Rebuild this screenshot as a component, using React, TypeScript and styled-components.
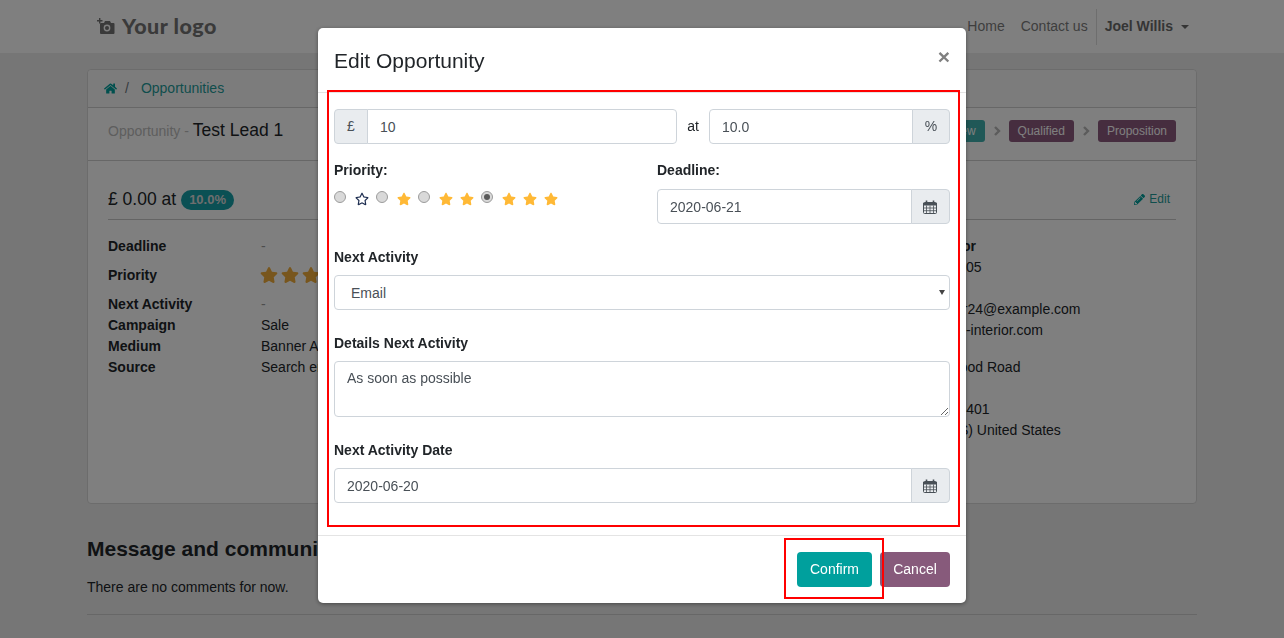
import React from "react";
import styled, { createGlobalStyle } from "styled-components";
import { FaHome, FaPencilAlt, FaStar, FaRegStar } from "react-icons/fa";

const GlobalStyle = createGlobalStyle`
	html, body {
		margin: 0;
		height: 100%;
		overflow: hidden;
		background: #ededed;
		font-family: "Liberation Sans", Arial, sans-serif;
		font-size: 14px;
		line-height: 21px;
		color: #212529;
	}
	* { box-sizing: border-box; }
`;

const Navbar = styled.header`
	height: 53px;
	background: #fff;
`;

const NavInner = styled.div`
	width: 1110px;
	height: 100%;
	margin: 0 auto;
	padding: 0 8px 0 10px;
	display: flex;
	align-items: center;
`;

const Logo = styled.div`
	display: flex;
	align-items: center;
	gap: 7px;
	font-family: Lato, sans-serif;
	font-weight: 900;
	font-size: 21.5px;
	letter-spacing: 0.5px;
	color: #747474;
`;

const NavLinks = styled.nav`
	margin-left: auto;
	display: flex;
	align-items: center;
	color: #7d7d7d;
`;

const NavLink = styled.span`
	margin-left: 16px;
`;

const UserMenu = styled.div`
	margin-left: 8px;
	height: 36px;
	padding-left: 8px;
	border-left: 1px solid #ddd;
	display: flex;
	align-items: center;
	gap: 8px;
	font-weight: 700;
	color: #6b6b6b;
`;

const Caret = styled.i`
	width: 0;
	height: 0;
	border-top: 4px solid #6b6b6b;
	border-left: 4px solid transparent;
	border-right: 4px solid transparent;
`;

const Main = styled.main`
	width: 1110px;
	margin: 16px auto 0;
`;

const Card = styled.section`
	height: 435px;
	background: #fff;
	border: 1px solid #d8d8d8;
	border-radius: 4px;
`;

const Breadcrumb = styled.div`
	height: 38px;
	padding: 0 16px;
	display: flex;
	align-items: center;
	background: #f9f9f9;
	border-bottom: 1px solid #cfcfcf;
	border-radius: 4px 4px 0 0;
	color: #6c757d;
`;

const TealLink = styled.span`
	color: #1f9c9a;
	margin-left: 12px;
`;

const HomeIcon = styled(FaHome)`
	color: #00a09d;
	font-size: 13px;
	margin-right: 8px;
`;

const TitleRow = styled.div`
	height: 53px;
	padding: 11px 20px 0;
	display: flex;
	justify-content: space-between;
	border-bottom: 1px solid #cfcfcf;
`;

const Title = styled.div`
	color: #bcbcbc;
	font-size: 14px;
	line-height: 22px;
`;

const TitleName = styled.span`
	color: #212529;
	font-size: 17.5px;
`;

const Steps = styled.div`
	display: flex;
	align-items: flex-start;
	gap: 8px;
	padding-top: 1px;
`;

const Step = styled.span<{ $active?: boolean }>`
	height: 22px;
	padding: 0 9px;
	font-size: 12px;
	line-height: 22px;
	border-radius: 3px;
	color: #fff;
	background: ${({ $active }) => ($active ? "#40b0ae" : "#8d5a7e")};
`;

const ArrowSvg = styled.svg`
	margin: 6px 0 0 1px;
`;

const StepArrow = () => (
	<ArrowSvg width="7" height="10" viewBox="0 0 7 10" fill="none" stroke="#b8b8b8" strokeWidth="2.400">
		<path d="M1 1l4 4-4 4" />
	</ArrowSvg>
);

const CardBody = styled.div`
	padding: 28px 20px 0;
	display: grid;
	grid-template-columns: 777px 1fr;
`;

const Summary = styled.div`
	grid-column: 1 / 3;
	height: 31px;
	display: flex;
	align-items: flex-start;
	border-bottom: 1px solid #c9c9c9;
	font-size: 17.5px;
	margin-bottom: 16px;
`;

const Percent = styled.b`
	margin-left: 5px;
	margin-top: 1px;
	padding: 0 8px;
	height: 20px;
	border-radius: 10px;
	background: #17a0a8;
	color: #ddd;
	font-size: 13px;
	line-height: 20px;
`;

const EditLink = styled.span`
	margin-left: auto;
	margin-right: 6px;
	color: #1f9c9a;
	font-size: 12px;
	display: flex;
	align-items: center;
	gap: 4px;
	height: 21px;
`;

const InfoTable = styled.dl`
	margin: 0;
	display: grid;
	grid-template-columns: 153px 1fr;
	align-content: start;
`;

const InfoLabel = styled.dt<{ $gap?: boolean }>`
	font-weight: 700;
	margin-top: ${({ $gap }) => ($gap ? "8px" : "0")};
`;

const InfoValue = styled.dd<{ $gap?: boolean; $muted?: boolean }>`
	margin: ${({ $gap }) => ($gap ? "8px 0 0" : "0")};
	height: 21px;
	white-space: nowrap;
	display: flex;
	align-items: center;
	gap: 3px;
	color: ${({ $muted }) => ($muted ? "#9a9a9a" : "inherit")};
`;

const GoldStar = styled(FaStar)`
	color: #f0ad3a;
	font-size: 18px;
	margin-top: -2px;
	&:first-child {
		margin-left: -1px;
	}
`;

const Contact = styled.div`
	display: flex;
	flex-direction: column;
`;

const ContactLine = styled.div<{ $bold?: boolean; $top?: number }>`
	min-height: 21px;
	font-weight: ${({ $bold }) => ($bold ? 700 : 400)};
	margin-top: ${({ $top }) => $top ?? 0}px;
	white-space: nowrap;
`;

const Comments = styled.div`
	margin-top: 32px;
`;

const CommentsTitle = styled.h3`
	margin: 0 0 15px;
	font-size: 21px;
	line-height: 26px;
	font-weight: 700;
`;

const CommentsEnd = styled.hr`
	margin: 16px 0 0;
	border: 0;
	border-top: 1px solid #cfcfcf;
`;

const Backdrop = styled.div`
	position: fixed;
	inset: 0;
	background: rgba(0, 0, 0, 0.5);
`;

const Modal = styled.form`
	position: relative;
	width: 648px;
	height: 575px;
	margin: 28px auto 0;
	background: #fff;
	border-radius: 5px;
	box-shadow: 0 1px 4px rgba(0, 0, 0, 0.4);
	display: flex;
	flex-direction: column;
`;

const ModalHeader = styled.div`
	height: 65px;
	padding: 0 16px;
	display: flex;
	align-items: center;
	justify-content: space-between;
	border-bottom: 1px solid #e4e4e4;
`;

const ModalTitle = styled.h4`
	margin: 0;
	font-size: 21px;
	font-weight: 400;
`;

const CloseMark = styled.span`
	color: #808080;
	font-size: 21px;
	font-weight: 700;
	margin-bottom: 8px;
`;

const ModalBody = styled.div`
	flex: 1;
	padding: 16px 16px 0;
`;

const AmountRow = styled.div`
	display: grid;
	grid-template-columns: 343px 32px 241px;
	align-items: center;
	margin-bottom: 16px;
`;

const AtText = styled.span`
	text-align: center;
`;

const InputGroup = styled.div`
	display: flex;
	height: 35px;
`;

const Addon = styled.span<{ $side: "left" | "right"; $width: number }>`
	flex: 0 0 ${({ $width }) => $width}px;
	display: flex;
	align-items: center;
	justify-content: center;
	background: #e9ecef;
	color: #495057;
	border: 1px solid #ced4da;
	border-radius: ${({ $side }) => ($side === "left" ? "4px 0 0 4px" : "0 4px 4px 0")};
	margin-${({ $side }) => ($side === "left" ? "right" : "left")}: -1px;
`;

const TextInput = styled.input<{ $joined?: "left" | "right" }>`
	flex: 1;
	min-width: 0;
	height: 35px;
	padding: 0 12px;
	border: 1px solid #ced4da;
	border-radius: ${({ $joined }) =>
		$joined === "left" ? "0 4px 4px 0" : $joined === "right" ? "4px 0 0 4px" : "4px"};
	color: #495057;
	font: inherit;
	background: #fff;
	outline: none;
`;

const DetailRow = styled.div`
	display: grid;
	grid-template-columns: 323px 293px;
	margin-bottom: 23px;
`;

const Label = styled.label`
	display: block;
	font-weight: 700;
	margin-bottom: 7px;
`;

const DeadlineLabel = styled(Label)`
	margin-bottom: 8px;
`;

const StarsRow = styled.div`
	display: flex;
	align-items: center;
	height: 16px;
	margin-top: 9px;
`;

const Radio = styled.input`
	appearance: none;
	width: 12px;
	height: 12px;
	margin: 0 9px 2px 0;
	border-radius: 50%;
	border: 1px solid #9b9b9b;
	background: #d9d9d9;
	display: grid;
	place-items: center;
	&:checked::after {
		content: "";
		width: 6px;
		height: 6px;
		border-radius: 50%;
		background: #5a5a5a;
	}
`;

const StarChoice = styled.span`
	display: flex;
	gap: 7px;
	margin: 1px 7px 0 0;
`;

const RatingStar = styled(FaStar)`
	color: #ffb936;
	font-size: 14px;
`;

const EmptyStar = styled(FaRegStar)`
	color: #1d2d50;
	font-size: 14px;
`;

const FormGroup = styled.div`
	margin-bottom: 23px;
`;

const SelectBox = styled.div`
	position: relative;
	&::after {
		content: "";
		position: absolute;
		top: 15px;
		right: 5px;
		border-top: 5px solid #444;
		border-left: 3px solid transparent;
		border-right: 3px solid transparent;
	}
`;

const Select = styled.select`
	appearance: none;
	width: 100%;
	height: 35px;
	padding: 1px 12px 0 16px;
	border: 1px solid #ced4da;
	border-radius: 4px;
	background: #fff;
	color: #495057;
	font: inherit;
	outline: none;
`;

const TextArea = styled.textarea`
	display: block;
	width: 100%;
	height: 56px;
	padding: 6px 12px;
	border: 1px solid #ced4da;
	border-radius: 4px;
	color: #495057;
	font: inherit;
	resize: vertical;
	outline: none;
`;

const ModalFooter = styled.div`
	height: 68px;
	padding: 16px;
	display: flex;
	justify-content: flex-end;
	gap: 8px;
	border-top: 1px solid #e4e4e4;
`;

const Button = styled.button<{ $color: string; $width: number }>`
	width: ${({ $width }) => $width}px;
	height: 35px;
	padding: 0;
	border: 0;
	border-radius: 4px;
	background: ${({ $color }) => $color};
	color: #fff;
	font: inherit;
`;

const Highlight = styled.div<{ $left: number; $top: number; $width: number; $height: number }>`
	position: absolute;
	left: ${({ $left }) => $left}px;
	top: ${({ $top }) => $top}px;
	width: ${({ $width }) => $width}px;
	height: ${({ $height }) => $height}px;
	border: 2px solid #f00;
	pointer-events: none;
`;

const CalendarIcon = () => (
	<svg width="14" height="14" viewBox="0 0 14 14" fill="none" stroke="#495057" style={{ marginRight: 1 }}>
		<rect x="0.5" y="2.5" width="13" height="11" rx="1" />
		<path d="M0 3h14v2.5H0z" fill="#495057" stroke="none" />
		<path d="M0.5 8h13M0.5 10.7h13M3.500 5.500v8M7 5.500v8M10.500 5.500v8" strokeWidth="0.8" />
		<path d="M3.500 0.500v3M10.500 0.500v3" strokeWidth="1.600" />
	</svg>
);

const CameraLogo = () => (
	<svg width="18" height="17" viewBox="0 0 18 17" fill="#747474">
		<path d="M3 6a1 1 0 0 1 1-1h3l1-2h5l1 2h2.500a1 1 0 0 1 1 1v9a1 1 0 0 1-1 1H4a1 1 0 0 1-1-1z" />
		<circle cx="10" cy="10" r="3.400" fill="#fff" />
		<circle cx="10" cy="10" r="2" />
		<path d="M2 0h1.400v2H5.500v1.400H3.400v2H2v-2H0V2h2z" />
	</svg>
);

const Stars = ({ count }: { count: number }) => (
	<StarChoice>
		{count === 0 ? <EmptyStar /> : Array.from({ length: count }, (_, i) => <RatingStar key={i} />)}
	</StarChoice>
);

const App: React.FC = () => {
	return (
		<>
			<GlobalStyle />
			<Navbar>
				<NavInner>
					<Logo>
						<CameraLogo />
						Your logo
					</Logo>
					<NavLinks>
						<NavLink>Home</NavLink>
						<NavLink>Contact us</NavLink>
						<UserMenu>
							Joel Willis
							<Caret />
						</UserMenu>
					</NavLinks>
				</NavInner>
			</Navbar>
			<Main>
				<Card>
					<Breadcrumb>
						<HomeIcon />/<TealLink>Opportunities</TealLink>
					</Breadcrumb>
					<TitleRow>
						<Title>
							Opportunity - <TitleName>Test Lead 1</TitleName>
						</Title>
						<Steps>
							<Step $active>New</Step>
							<StepArrow />
							<Step>Qualified</Step>
							<StepArrow />
							<Step>Proposition</Step>
						</Steps>
					</TitleRow>
					<CardBody>
						<Summary>
							£ 0.00 at<Percent>10.0%</Percent>
							<EditLink>
								<FaPencilAlt size={11} color="#00a09d" />
								Edit
							</EditLink>
						</Summary>
						<InfoTable>
							<InfoLabel>Deadline</InfoLabel>
							<InfoValue $muted>-</InfoValue>
							<InfoLabel $gap>Priority</InfoLabel>
							<InfoValue $gap>
								<GoldStar />
								<GoldStar />
								<GoldStar />
							</InfoValue>
							<InfoLabel $gap>Next Activity</InfoLabel>
							<InfoValue $gap $muted>-</InfoValue>
							<InfoLabel>Campaign</InfoLabel>
							<InfoValue>Sale</InfoValue>
							<InfoLabel>Medium</InfoLabel>
							<InfoValue>Banner Ad</InfoValue>
							<InfoLabel>Source</InfoLabel>
							<InfoValue>Search engine</InfoValue>
						</InfoTable>
						<Contact>
							<ContactLine $bold>Azure Interior</ContactLine>
							<ContactLine>(870)-931-0505</ContactLine>
							<ContactLine $top={21}>azure.Interior24@example.com</ContactLine>
							<ContactLine>www.azure-1-interior.com</ContactLine>
							<ContactLine $top={16}>3404 Sherwood Road</ContactLine>
							<ContactLine />
							<ContactLine>Ashley AL 36401</ContactLine>
							<ContactLine>Alabama (US) United States</ContactLine>
						</Contact>
					</CardBody>
				</Card>
				<Comments>
					<CommentsTitle>Message and communication history</CommentsTitle>
					There are no comments for now.
					<CommentsEnd />
				</Comments>
			</Main>
			<Backdrop>
				<Modal>
					<ModalHeader>
						<ModalTitle>Edit Opportunity</ModalTitle>
						<CloseMark>×</CloseMark>
					</ModalHeader>
					<ModalBody>
						<AmountRow>
							<InputGroup>
								<Addon $side="left" $width={34}>£</Addon>
								<TextInput $joined="left" readOnly value="10" />
							</InputGroup>
							<AtText>at</AtText>
							<InputGroup>
								<TextInput $joined="right" readOnly value="10.0" />
								<Addon $side="right" $width={38}>%</Addon>
							</InputGroup>
						</AmountRow>
						<DetailRow>
							<div>
								<Label>Priority:</Label>
								<StarsRow>
									<Radio type="radio" name="priority" readOnly />
									<Stars count={0} />
									<Radio type="radio" name="priority" readOnly />
									<Stars count={1} />
									<Radio type="radio" name="priority" readOnly />
									<Stars count={2} />
									<Radio type="radio" name="priority" readOnly checked />
									<Stars count={3} />
								</StarsRow>
							</div>
							<div>
								<DeadlineLabel>Deadline:</DeadlineLabel>
								<InputGroup>
									<TextInput $joined="right" readOnly value="2020-06-21" />
									<Addon $side="right" $width={39}>
										<CalendarIcon />
									</Addon>
								</InputGroup>
							</div>
						</DetailRow>
						<FormGroup>
							<Label>Next Activity</Label>
							<SelectBox>
								<Select defaultValue="email">
									<option value="email">Email</option>
								</Select>
							</SelectBox>
						</FormGroup>
						<FormGroup>
							<Label>Details Next Activity</Label>
							<TextArea readOnly value="As soon as possible" />
						</FormGroup>
						<div>
							<Label>Next Activity Date</Label>
							<InputGroup>
								<TextInput $joined="right" readOnly value="2020-06-20" />
								<Addon $side="right" $width={39}>
									<CalendarIcon />
								</Addon>
							</InputGroup>
						</div>
					</ModalBody>
					<ModalFooter>
						<Button type="button" $color="#00a09d" $width={75}>Confirm</Button>
						<Button type="button" $color="#875a7b" $width={70}>Cancel</Button>
					</ModalFooter>
					<Highlight $left={9} $top={62} $width={633} $height={437} />
					<Highlight $left={466} $top={510} $width={100} $height={61} />
				</Modal>
			</Backdrop>
		</>
	);
};

export default App;
